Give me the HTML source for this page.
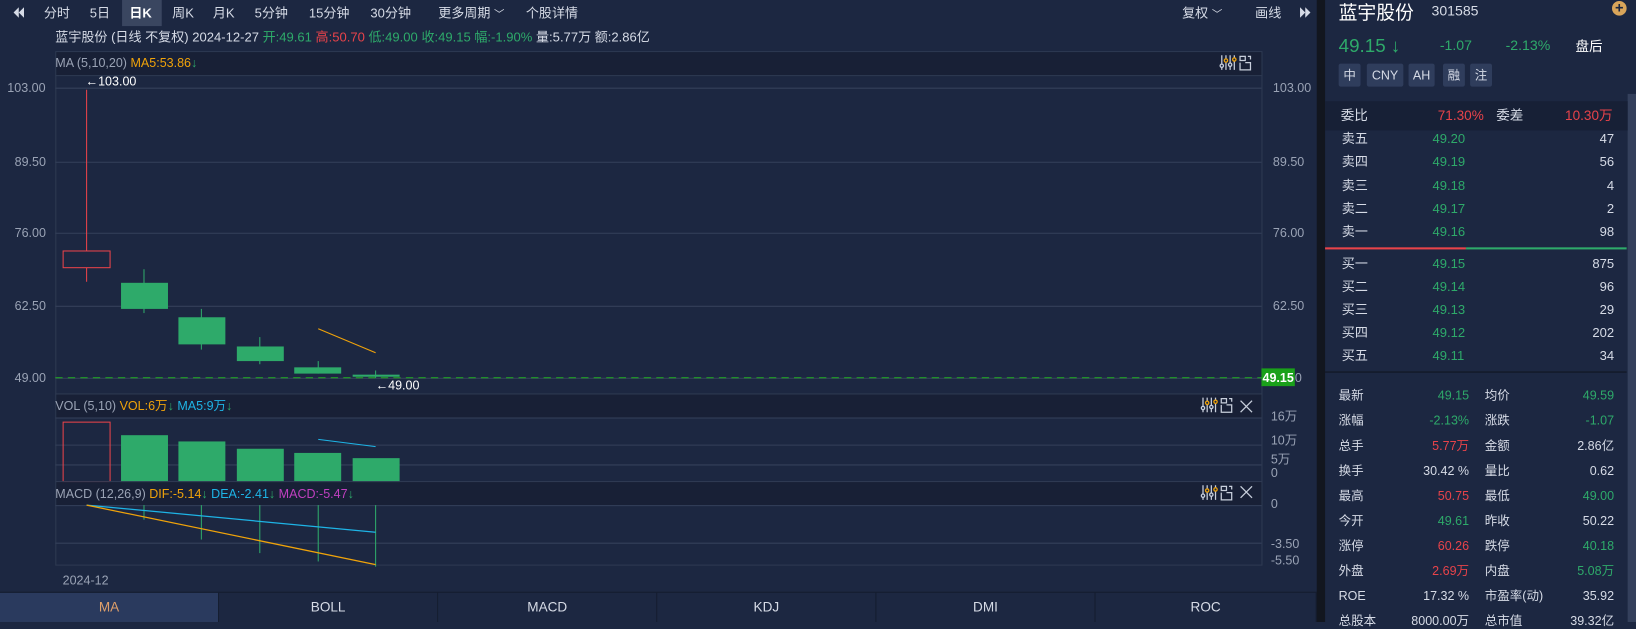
<!DOCTYPE html>
<html><head><meta charset="utf-8"><style>
*{margin:0;padding:0;box-sizing:border-box}
html,body{width:1636px;height:622px;overflow:hidden;background:#1c2741}
#w{position:absolute;left:0;top:0;width:1568px;height:596px;transform:scale(1.04337,1.0436);transform-origin:0 0;background:#1c2741;font-family:"Liberation Sans","Noto Sans CJK SC",sans-serif;color:#d6dbe6;font-size:12.5px}
.a{position:absolute;white-space:nowrap;line-height:16px}
.g{color:#2eaa6a}.r{color:#e8434a}.o{color:#f0a30a}.c{color:#1eb4e6}.m{color:#c040c0}.gy{color:#9aa3b5}
.rt{text-align:right}
.btn{position:absolute;top:61px;height:22px;background:#2f3d5c;color:#d6dbe6;font-size:12px;line-height:22px;text-align:center;border-radius:2px}
.tab{position:absolute;top:568px;height:28px;width:210px;line-height:28px;text-align:center;font-size:13px;border-right:1px solid #141c2e;background:#1c2741}
</style></head><body><div id="w">
<!-- nav -->
<div class="a" style="left:117px;top:0;width:38px;height:25px;background:#3a4660"></div>
<svg class="a" style="left:12px;top:6px" width="12" height="12"><path d="M6 1L1 6L6 11ZM11 1L6 6L11 11Z" fill="#d6dbe6"/></svg>
<div class="a" style="left:42px;top:5px">分时</div>
<div class="a" style="left:86px;top:5px">5日</div>
<div class="a" style="left:124px;top:5px;color:#fff;font-weight:bold">日K</div>
<div class="a" style="left:165px;top:5px">周K</div>
<div class="a" style="left:204px;top:5px">月K</div>
<div class="a" style="left:244px;top:5px">5分钟</div>
<div class="a" style="left:296px;top:5px">15分钟</div>
<div class="a" style="left:355px;top:5px">30分钟</div>
<div class="a" style="left:420px;top:5px">更多周期 <span style="font-size:10px">﹀</span></div>
<div class="a" style="left:504px;top:5px">个股详情</div>
<div class="a" style="left:1133px;top:5px">复权 <span style="font-size:10px">﹀</span></div>
<div class="a" style="left:1203px;top:5px">画线</div>
<svg class="a" style="left:1245px;top:6px" width="12" height="12"><path d="M1 1L6 6L1 11ZM6 1L11 6L6 11Z" fill="#d6dbe6"/></svg>
<!-- info -->
<div class="a" style="left:53px;top:28px;font-size:12.5px">蓝宇股份 (日线 不复权) 2024-12-27 <span class="g">开:49.61</span> <span class="r">高:50.70</span> <span class="g">低:49.00</span> <span class="g">收:49.15</span> <span class="g">幅:-1.90%</span> 量:5.77万 额:2.86亿</div>
<!-- chart svg -->
<svg class="a" style="left:0;top:0" width="1320" height="596">
<rect x="53.5" y="49.5" width="1156" height="328" fill="none" stroke="#2e3a52"/>
<rect x="54" y="50" width="1155" height="22" fill="#182036"/>
<line x1="53" y1="72.5" x2="1209" y2="72.5" stroke="#2e3a52"/>
<g stroke="#34405a">
<line x1="53" y1="84.5" x2="1209" y2="84.5"/><line x1="53" y1="155.5" x2="1209" y2="155.5"/><line x1="53" y1="223.5" x2="1209" y2="223.5"/><line x1="53" y1="293.5" x2="1209" y2="293.5"/><line x1="53" y1="362.5" x2="1209" y2="362.5"/>
</g>
<line x1="53" y1="362" x2="1209" y2="362" stroke="#22b022" stroke-dasharray="7,5"/>
<line x1="83" y1="86" x2="83" y2="270" stroke="#e8434a"/>
<rect x="60.5" y="240.5" width="45" height="16" fill="#1c2741" stroke="#e8434a"/>
<g stroke="#2eaa6a"><line x1="138" y1="258" x2="138" y2="300"/><line x1="193" y1="296" x2="193" y2="335"/><line x1="249" y1="323" x2="249" y2="349"/><line x1="305" y1="346" x2="305" y2="358"/><line x1="360" y1="355" x2="360" y2="362"/></g>
<g fill="#2eaa6a"><rect x="116" y="271" width="45" height="25"/><rect x="171" y="304" width="45" height="26"/><rect x="227" y="332" width="45" height="14"/><rect x="282" y="352" width="45" height="6"/><rect x="338" y="359" width="45" height="2"/></g>
<line x1="305" y1="315" x2="360" y2="338" stroke="#f0a30a"/>
<rect x="53.5" y="377.5" width="1156" height="84" fill="none" stroke="#2e3a52"/>
<rect x="54" y="378" width="1155" height="22" fill="#182036"/>
<g stroke="#34405a"><line x1="53" y1="400.5" x2="1209" y2="400.5"/><line x1="53" y1="426.5" x2="1209" y2="426.5"/><line x1="53" y1="445.5" x2="1209" y2="445.5"/></g>
<rect x="60.5" y="404.5" width="45" height="57" fill="none" stroke="#e8434a"/>
<g fill="#2eaa6a"><rect x="116" y="417" width="45" height="45"/><rect x="171" y="423" width="45" height="39"/><rect x="227" y="430" width="45" height="32"/><rect x="282" y="434" width="45" height="28"/><rect x="338" y="439" width="45" height="23"/></g>
<line x1="305" y1="421" x2="360" y2="428" stroke="#1eb4e6"/>
<rect x="53.5" y="461.5" width="1156" height="80" fill="none" stroke="#2e3a52"/>
<rect x="54" y="462" width="1155" height="22" fill="#182036"/>
<g stroke="#34405a"><line x1="53" y1="484.5" x2="1209" y2="484.5"/><line x1="53" y1="520.5" x2="1209" y2="520.5"/></g>
<g stroke="#2eaa6a"><line x1="138" y1="484" x2="138" y2="498"/><line x1="193" y1="484" x2="193" y2="517"/><line x1="249" y1="484" x2="249" y2="530"/><line x1="305" y1="484" x2="305" y2="538"/><line x1="360" y1="484" x2="360" y2="543"/></g>
<line x1="83" y1="484" x2="360" y2="510" stroke="#1eb4e6" stroke-width="1.2"/>
<line x1="83" y1="484" x2="360" y2="541" stroke="#f0a30a" stroke-width="1.2"/>
<g fill="none" stroke-width="1.2">
<g id="ic"><path d="M1171 53v14M1175 53v14M1179 53v14M1183 53v14" stroke="#c8cfdc"/>
<circle cx="1171" cy="63" r="1.6" fill="#1c2741" stroke="#c8cfdc"/><circle cx="1175" cy="58" r="1.6" fill="#1c2741" stroke="#f0a30a"/><circle cx="1179" cy="62" r="1.6" fill="#1c2741" stroke="#c8cfdc"/><circle cx="1183" cy="57" r="1.6" fill="#1c2741" stroke="#f0a30a"/>
<path d="M1188.5 54h5v4h-5zM1188.5 60v7h10v-7h-5M1196 54h2.5v3" stroke="#c8cfdc"/></g>
<use href="#ic" transform="translate(-18,328)"/><path d="M1189 384l11 11M1200 384l-11 11" stroke="#c8cfdc"/>
<use href="#ic" transform="translate(-18,412)"/><path d="M1189 466l11 11M1200 466l-11 11" stroke="#c8cfdc"/>
</g>
<rect x="1209" y="353" width="32" height="17" fill="#1aa01a"/>
</svg>
<div class="a gy" style="left:53px;top:52px;font-size:12px">MA (5,10,20) <span class="o">MA5:53.86</span><span class="g">↓</span></div>
<div class="a gy" style="left:53px;top:381px;font-size:12px">VOL (5,10) <span class="o">VOL:6万</span><span class="g">↓</span> <span class="c">MA5:9万</span><span class="g">↓</span></div>
<div class="a gy" style="left:53px;top:465px;font-size:12px">MACD (12,26,9) <span class="o">DIF:-5.14</span><span class="g">↓</span> <span class="c">DEA:-2.41</span><span class="g">↓</span> <span class="m">MACD:-5.47</span><span class="g">↓</span></div>
<div class="a" style="left:82px;top:70px;font-size:12px;color:#fff">←103.00</div>
<div class="a" style="left:360px;top:361px;font-size:12px;color:#fff">←49.00</div>
<div class="a" style="left:1210px;top:354px;font-size:12px;color:#fff;font-weight:bold">49.15</div>
<div class="a gy" style="left:7px;top:76px;font-size:12px">103.00</div>
<div class="a gy" style="left:14px;top:147px;font-size:12px">89.50</div>
<div class="a gy" style="left:14px;top:215px;font-size:12px">76.00</div>
<div class="a gy" style="left:14px;top:285px;font-size:12px">62.50</div>
<div class="a gy" style="left:14px;top:354px;font-size:12px">49.00</div>
<div class="a gy" style="left:1220px;top:76px;font-size:12px">103.00</div>
<div class="a gy" style="left:1220px;top:147px;font-size:12px">89.50</div>
<div class="a gy" style="left:1220px;top:215px;font-size:12px">76.00</div>
<div class="a gy" style="left:1220px;top:285px;font-size:12px">62.50</div>
<div class="a gy" style="left:1241px;top:354px;font-size:12px">0</div>
<div class="a gy" style="left:1218px;top:391px;font-size:12px">16万</div>
<div class="a gy" style="left:1218px;top:414px;font-size:12px">10万</div>
<div class="a gy" style="left:1218px;top:432px;font-size:12px">5万</div>
<div class="a gy" style="left:1218px;top:445px;font-size:12px">0</div>
<div class="a gy" style="left:1218px;top:475px;font-size:12px">0</div>
<div class="a gy" style="left:1218px;top:513px;font-size:12px">-3.50</div>
<div class="a gy" style="left:1218px;top:529px;font-size:12px">-5.50</div>
<div class="a gy" style="left:60px;top:548px;font-size:12px">2024-12</div>
<!-- tabs -->
<div class="tab" style="left:0;background:#2a3a5e;color:#e0a06a">MA</div>
<div class="tab" style="left:210px">BOLL</div>
<div class="tab" style="left:420px">MACD</div>
<div class="tab" style="left:630px">KDJ</div>
<div class="tab" style="left:840px">DMI</div>
<div class="tab" style="left:1050px;width:212px">ROC</div>
<div class="a" style="left:0;top:567px;width:1262px;height:1px;background:#141c2e"></div>
<div class="a" style="left:1262px;top:0;width:8px;height:596px;background:#12161f"></div>
<!-- right panel -->
<div class="a" style="left:1560px;top:90px;width:8px;height:506px;background:#34405c"></div>
<div class="a" style="left:1283px;top:0px;font-size:18px;line-height:24px;color:#fff">蓝宇股份</div>
<div class="a" style="left:1372px;top:3px;font-size:13.5px">301585</div>
<div class="a" style="left:1545px;top:1px;width:14px;height:14px;border-radius:50%;background:#d9a55a;color:#1c2741;font-size:14px;line-height:13px;text-align:center;font-weight:bold">+</div>
<div class="a g" style="left:1283px;top:33px;font-size:18px;line-height:22px">49.15 ↓</div>
<div class="a g" style="left:1380px;top:36px;font-size:13.5px">-1.07</div>
<div class="a g" style="left:1443px;top:36px;font-size:13.5px">-2.13%</div>
<div class="a" style="left:1510px;top:37px;font-size:13px;color:#fff">盘后</div>
<div class="btn" style="left:1283px;width:21px">中</div>
<div class="btn" style="left:1310px;width:35px">CNY</div>
<div class="btn" style="left:1350px;width:25px">AH</div>
<div class="btn" style="left:1383px;width:21px">融</div>
<div class="btn" style="left:1409px;width:21px">注</div>
<div class="a" style="left:1270px;top:97px;width:290px;height:28px;background:#172036"></div>
<div class="a" style="left:1285px;top:103px;font-size:13px">委比</div>
<div class="a r" style="left:1378px;top:103px;font-size:13px">71.30%</div>
<div class="a" style="left:1434px;top:103px;font-size:13px">委差</div>
<div class="a r" style="left:1500px;top:103px;font-size:13px">10.30万</div>
<div class="a" style="left:1270px;top:237px;width:135px;height:2px;background:#e8434a"></div>
<div class="a" style="left:1405px;top:237px;width:154px;height:2px;background:#2eaa6a"></div>
<div class="a" style="left:1270px;top:356px;width:289px;height:1px;background:#0f1420"></div>
<div style="font-size:12.5px">
<div class="a" style="left:1286px;top:125px">卖五</div><div class="a g" style="left:1373px;top:125px">49.20</div><div class="a rt" style="left:1487px;width:60px;top:125px">47</div>
<div class="a" style="left:1286px;top:147px">卖四</div><div class="a g" style="left:1373px;top:147px">49.19</div><div class="a rt" style="left:1487px;width:60px;top:147px">56</div>
<div class="a" style="left:1286px;top:170px">卖三</div><div class="a g" style="left:1373px;top:170px">49.18</div><div class="a rt" style="left:1487px;width:60px;top:170px">4</div>
<div class="a" style="left:1286px;top:192px">卖二</div><div class="a g" style="left:1373px;top:192px">49.17</div><div class="a rt" style="left:1487px;width:60px;top:192px">2</div>
<div class="a" style="left:1286px;top:214px">卖一</div><div class="a g" style="left:1373px;top:214px">49.16</div><div class="a rt" style="left:1487px;width:60px;top:214px">98</div>
<div class="a" style="left:1286px;top:245px">买一</div><div class="a g" style="left:1373px;top:245px">49.15</div><div class="a rt" style="left:1487px;width:60px;top:245px">875</div>
<div class="a" style="left:1286px;top:267px">买二</div><div class="a g" style="left:1373px;top:267px">49.14</div><div class="a rt" style="left:1487px;width:60px;top:267px">96</div>
<div class="a" style="left:1286px;top:289px">买三</div><div class="a g" style="left:1373px;top:289px">49.13</div><div class="a rt" style="left:1487px;width:60px;top:289px">29</div>
<div class="a" style="left:1286px;top:311px">买四</div><div class="a g" style="left:1373px;top:311px">49.12</div><div class="a rt" style="left:1487px;width:60px;top:311px">202</div>
<div class="a" style="left:1286px;top:333px">买五</div><div class="a g" style="left:1373px;top:333px">49.11</div><div class="a rt" style="left:1487px;width:60px;top:333px">34</div>
</div>
<div style="font-size:12px">
<div class="a" style="left:1283px;top:371px">最新</div><div class="a rt g" style="left:1338px;width:70px;top:371px">49.15</div><div class="a" style="left:1423px;top:371px">均价</div><div class="a rt g" style="left:1477px;width:70px;top:371px">49.59</div>
<div class="a" style="left:1283px;top:395px">涨幅</div><div class="a rt g" style="left:1338px;width:70px;top:395px">-2.13%</div><div class="a" style="left:1423px;top:395px">涨跌</div><div class="a rt g" style="left:1477px;width:70px;top:395px">-1.07</div>
<div class="a" style="left:1283px;top:419px">总手</div><div class="a rt r" style="left:1338px;width:70px;top:419px">5.77万</div><div class="a" style="left:1423px;top:419px">金额</div><div class="a rt" style="left:1477px;width:70px;top:419px">2.86亿</div>
<div class="a" style="left:1283px;top:443px">换手</div><div class="a rt" style="left:1338px;width:70px;top:443px">30.42 %</div><div class="a" style="left:1423px;top:443px">量比</div><div class="a rt" style="left:1477px;width:70px;top:443px">0.62</div>
<div class="a" style="left:1283px;top:467px">最高</div><div class="a rt r" style="left:1338px;width:70px;top:467px">50.75</div><div class="a" style="left:1423px;top:467px">最低</div><div class="a rt g" style="left:1477px;width:70px;top:467px">49.00</div>
<div class="a" style="left:1283px;top:491px">今开</div><div class="a rt g" style="left:1338px;width:70px;top:491px">49.61</div><div class="a" style="left:1423px;top:491px">昨收</div><div class="a rt" style="left:1477px;width:70px;top:491px">50.22</div>
<div class="a" style="left:1283px;top:515px">涨停</div><div class="a rt r" style="left:1338px;width:70px;top:515px">60.26</div><div class="a" style="left:1423px;top:515px">跌停</div><div class="a rt g" style="left:1477px;width:70px;top:515px">40.18</div>
<div class="a" style="left:1283px;top:539px">外盘</div><div class="a rt r" style="left:1338px;width:70px;top:539px">2.69万</div><div class="a" style="left:1423px;top:539px">内盘</div><div class="a rt g" style="left:1477px;width:70px;top:539px">5.08万</div>
<div class="a" style="left:1283px;top:563px">ROE</div><div class="a rt" style="left:1338px;width:70px;top:563px">17.32 %</div><div class="a" style="left:1423px;top:563px">市盈率(动)</div><div class="a rt" style="left:1477px;width:70px;top:563px">35.92</div>
<div class="a" style="left:1283px;top:587px">总股本</div><div class="a rt" style="left:1338px;width:70px;top:587px">8000.00万</div><div class="a" style="left:1423px;top:587px">总市值</div><div class="a rt" style="left:1477px;width:70px;top:587px">39.32亿</div>
</div>
</div></body></html>
